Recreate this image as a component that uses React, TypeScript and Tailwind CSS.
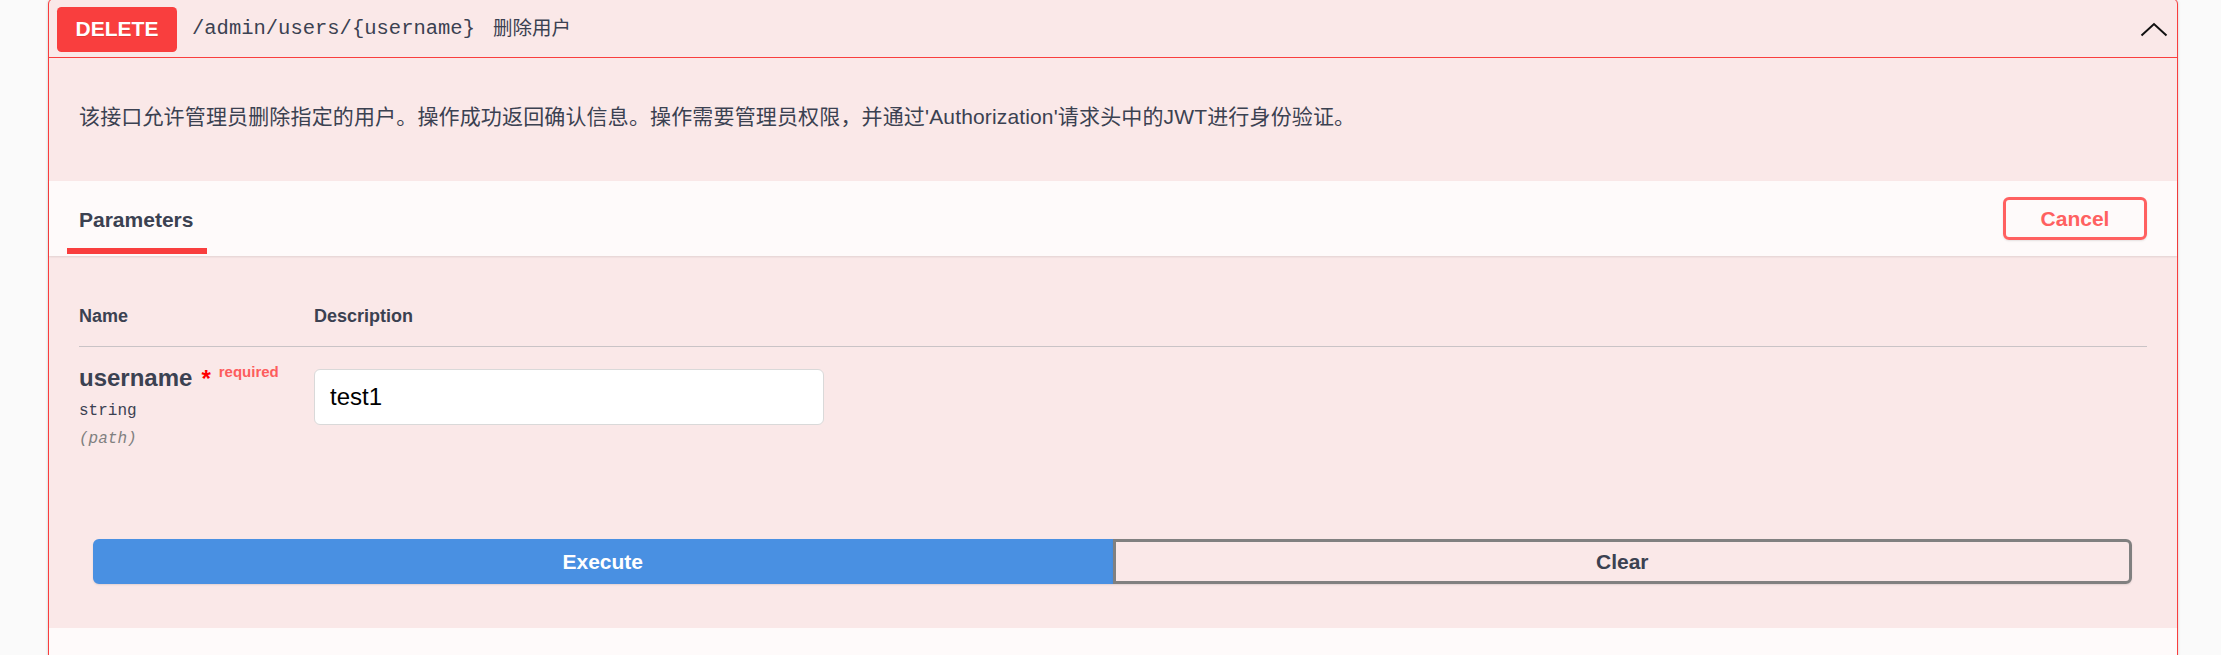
import React from "react";

const sans = { fontFamily: '"Liberation Sans", "Noto Sans CJK SC", sans-serif' };
const mono = { fontFamily: '"Liberation Mono", "Noto Sans CJK SC", monospace' };

export default function App() {
  return (
    <div className="h-[655px] w-full overflow-hidden bg-[#fafafa]" style={sans}>
      <div className="ml-[48px] -mt-[2px] w-[2130px] rounded-[6px] border border-[#f93e3e] bg-[#fae8e8] shadow-[0_0_3px_rgba(0,0,0,0.19)]">
        {/* Summary */}
        <div className="flex h-[59px] items-center border-b border-[#f93e3e] pt-[2px] pl-[8px] pr-[9px]">
          <div className="flex h-[45px] w-[120px] items-center justify-center rounded-[4.5px] bg-[#f93e3e] text-[21px] font-bold text-white [text-shadow:0_1px_0_rgba(0,0,0,0.1)]">
            DELETE
          </div>
          <span className="ml-[15px] text-[20.5px] text-[#3b4151]" style={mono}>
            /admin/users/{"{username}"}
          </span>
          <span className="ml-[18px] text-[19.5px] text-[#3b4151]">删除用户</span>
          <svg className="ml-auto" width="28" height="15" viewBox="0 0 28 15">
            <polyline points="1.5,13.5 14,2 26.5,13.5" fill="none" stroke="#111" strokeWidth="2" />
          </svg>
        </div>

        {/* Description */}
        <div className="h-[123px] px-[30px] pt-[44px]">
          <p className="text-[21px] leading-[30px] tracking-[0.15px] text-[#3b4151]">
            该接口允许管理员删除指定的用户。操作成功返回确认信息。操作需要管理员权限，并通过'Authorization'请求头中的JWT进行身份验证。
          </p>
        </div>

        {/* Parameters header */}
        <div className="flex h-[75px] items-center bg-[#fefafa] pr-[30px] shadow-[0_1px_2px_rgba(0,0,0,0.1)]">
          <div className="ml-[18px] flex flex-col self-stretch">
            <span className="pl-[12px] pr-[14px] pt-[24px] text-[21px] font-bold leading-[30px] text-[#3b4151]">
              Parameters
            </span>
            <div className="mt-[13px] h-[6px] bg-[#f93e3e]" />
          </div>
          <button className="ml-auto flex h-[43px] w-[144px] items-center justify-center rounded-[6px] border-[3px] border-[#ff6060] text-[21px] font-bold text-[#ff6060] shadow-[0_1px_2px_rgba(0,0,0,0.1)]">
            Cancel
          </button>
        </div>

        {/* Parameters table */}
        <div className="h-[253px] px-[30px] pt-[47px]">
          <div className="flex border-b border-[#c9c3c6] pb-[16px] text-[18px] font-bold leading-[27px] text-[#3b4151]">
            <div className="w-[235px]">Name</div>
            <div>Description</div>
          </div>
          <div className="flex pt-[22px]">
            <div className="w-[235px]">
              <div className="-mt-[6px] flex items-start">
                <span className="text-[24px] font-bold leading-[30px] text-[#3b4151]">username</span>
                <span className="relative top-[1px] ml-[9px] text-[24px] font-bold leading-[30px] text-[#ff0000]">*</span>
                <span className="relative -top-[6px] ml-[8px] text-[15px] font-bold leading-[30px] text-[#fd5d5d]">required</span>
              </div>
              <div className="mt-[4px] text-[16px] leading-[28px] text-[#3b4151]" style={mono}>
                string
              </div>
              <div className="text-[16px] italic leading-[28px] text-[#808080]" style={mono}>
                (path)
              </div>
            </div>
            <div>
              <div className="flex h-[56px] w-[510px] items-center rounded-[6px] border border-[#d9d9d9] bg-white px-[15px] text-[24px] text-black">
                test1
              </div>
            </div>
          </div>
        </div>

        {/* Execute */}
        <div className="h-[119px] pl-[44px] pr-[45px] pt-[30px]">
          <div className="flex h-[45px]">
            <button className="flex flex-1 items-center justify-center rounded-l-[6px] border-[3px] border-[#4990e2] bg-[#4990e2] text-[21px] font-bold text-white shadow-[0_1px_2px_rgba(0,0,0,0.1)]">
              Execute
            </button>
            <button className="flex flex-1 items-center justify-center rounded-r-[6px] border-[3px] border-[#808080] text-[21px] font-bold text-[#3b4151] shadow-[0_1px_2px_rgba(0,0,0,0.1)]">
              Clear
            </button>
          </div>
        </div>

        {/* Responses header band */}
        <div className="h-[80px] bg-[#fefafa]" />
      </div>
    </div>
  );
}
